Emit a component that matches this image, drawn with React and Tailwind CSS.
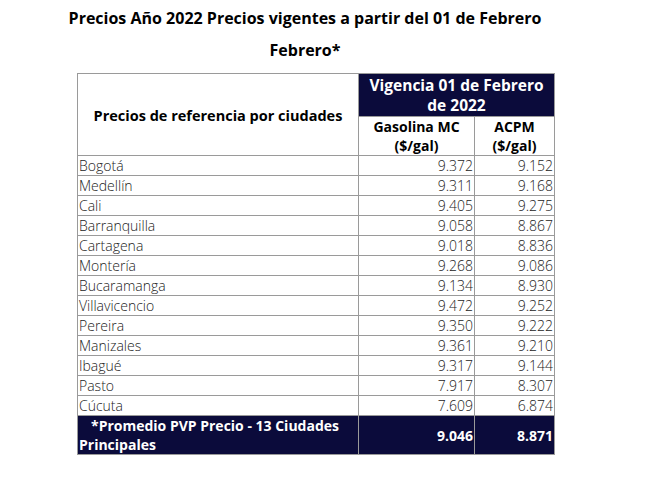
const ROWS = [
  ['Bogotá', '9.372', '9.152'],
  ['Medellín', '9.311', '9.168'],
  ['Cali', '9.405', '9.275'],
  ['Barranquilla', '9.058', '8.867'],
  ['Cartagena', '9.018', '8.836'],
  ['Montería', '9.268', '9.086'],
  ['Bucaramanga', '9.134', '8.930'],
  ['Villavicencio', '9.472', '9.252'],
  ['Pereira', '9.350', '9.222'],
  ['Manizales', '9.361', '9.210'],
  ['Ibagué', '9.317', '9.144'],
  ['Pasto', '7.917', '8.307'],
  ['Cúcuta', '7.609', '6.874'],
];

export default function App() {
  return (
    <div className="w-[650px] h-[487px] bg-white text-black font-['Open_Sans',sans-serif]">
      <div className="w-[610px] text-center font-bold text-[16px] leading-[32px] pt-[2px]">
        <p>Precios Año 2022 Precios vigentes a partir del 01 de Febrero</p>
        <p>Febrero*</p>
      </div>

      <table className="ml-[77px] mt-[7px] w-[477px] border-collapse text-[14px] table-fixed">
        <colgroup>
          <col className="w-[281px]" />
          <col className="w-[116px]" />
          <col className="w-[80px]" />
        </colgroup>
        <thead>
          <tr className="h-[43px]">
            <th rowSpan={2} className="border border-[#9a9a9a] font-bold text-[14.5px] pt-[2px] align-middle">
              Precios de referencia por ciudades
            </th>
            <th colSpan={2} className="border border-[#9a9a9a] bg-[#0b0b3b] text-white font-bold text-[15.5px] leading-[20px]">
              Vigencia 01 de Febrero<br />de 2022
            </th>
          </tr>
          <tr className="h-[39px]">
            <th className="border border-[#9a9a9a] font-bold text-[14px] leading-[19px]">
              Gasolina MC<br />($/gal)
            </th>
            <th className="border border-[#9a9a9a] font-bold text-[14px] leading-[19px]">
              ACPM<br />($/gal)
            </th>
          </tr>
        </thead>
        <tbody className="font-light text-[#222]">
          {ROWS.map(([city, gas, acpm]) => (
            <tr key={city} className="h-[20px] leading-[19px]">
              <td className="border border-[#9a9a9a] pl-[1px]">{city}</td>
              <td className="border border-[#9a9a9a] text-right pr-[1px]">{gas}</td>
              <td className="border border-[#9a9a9a] text-right pr-[1px]">{acpm}</td>
            </tr>
          ))}
          <tr className="h-[38px] bg-[#0b0b3b] text-white font-bold">
            <td className="border border-[#9a9a9a] text-[14px] leading-[19px] pl-[1px]">
              <span className="pl-[12px]">*Promedio PVP Precio - 13 Ciudades</span>
              <br />
              Principales
            </td>
            <td className="border border-[#9a9a9a] text-right pr-[1px] text-[14px]">9.046</td>
            <td className="border border-[#9a9a9a] text-right pr-[1px] text-[14px]">8.871</td>
          </tr>
        </tbody>
      </table>
    </div>
  );
}
